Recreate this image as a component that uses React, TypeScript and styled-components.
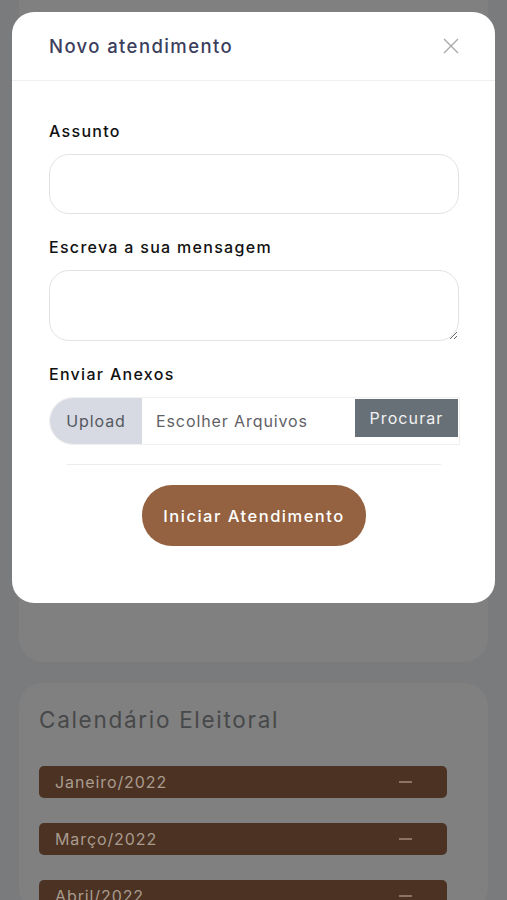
import styled, { createGlobalStyle } from 'styled-components'

const GlobalStyle = createGlobalStyle`
  html, body {
    margin: 0;
    padding: 0;
    background: #7a7b7d;
    font-family: Inter, 'Noto Sans', sans-serif;
  }
  * {
    box-sizing: border-box;
  }
`

const months = ['Janeiro/2022', 'Março/2022', 'Abril/2022']

const Page = styled.div`
  position: relative;
  height: 900px;
  overflow: hidden;
  padding: 0 19px;
  display: flex;
  flex-direction: column;
  gap: 21px;
`

const Card = styled.section<{ $height?: number }>`
  background: #808080;
  border-radius: 24px;
  height: ${p => (p.$height ? `${p.$height}px` : 'auto')};
  padding: 19px 41px 0 20px;
  flex-shrink: 0;
`

const TopCard = styled(Card)`
  border-radius: 0 0 24px 24px;
`

const CardTitle = styled.h2`
  margin: 0 0 28px;
  font-size: 22.5px;
  font-weight: 400;
  line-height: 36px;
  letter-spacing: 1.7px;
  color: #474849;
`

const AccordionList = styled.div`
  display: flex;
  flex-direction: column;
  gap: 25px;
`

const AccordionBar = styled.div`
  height: 32px;
  background: #4c3223;
  border-radius: 5px;
  display: flex;
  align-items: center;
  justify-content: space-between;
  padding: 0 35px 0 16px;
  color: #a99c8f;
  font-size: 16px;
  letter-spacing: 0.9px;
`

const Minus = styled.span`
  width: 13px;
  height: 1.5px;
  background: #8b7463;
`

const Modal = styled.div`
  position: absolute;
  top: 12px;
  left: 12px;
  width: 483px;
  height: 591px;
  background: #fff;
  border-radius: 22px;
  display: flex;
  flex-direction: column;
`

const ModalHeader = styled.header`
  height: 69px;
  flex-shrink: 0;
  border-bottom: 1px solid #eeeff1;
  display: flex;
  align-items: center;
  justify-content: space-between;
  padding: 0 36px 0 37px;
`

const ModalTitle = styled.h1`
  margin: 0;
  font-size: 18.5px;
  font-weight: 500;
  letter-spacing: 1.4px;
  color: #3b3e5d;
`

const CloseButton = styled.button`
  border: none;
  background: none;
  padding: 0;
  width: 16px;
  height: 16px;
  display: flex;
  cursor: pointer;
`

const ModalBody = styled.form`
  padding: 38px 36px 0 37px;
  display: flex;
  flex-direction: column;
`

const Label = styled.label`
  font-size: 16px;
  font-weight: 500;
  line-height: 24px;
  letter-spacing: 1.3px;
  color: #111;
  margin-bottom: 11px;
`

const TextInput = styled.input`
  height: 60px;
  border: 1.5px solid #e2e2e2;
  border-radius: 20px;
  margin-bottom: 21px;
  font: inherit;
  padding: 0 18px;
  outline: none;
`

const TextArea = styled.textarea`
  height: 71px;
  border: 1.5px solid #e2e2e2;
  border-radius: 20px;
  margin-bottom: 21px;
  font: inherit;
  padding: 12px 18px;
  resize: vertical;
  outline: none;
`

const FileGroup = styled.div`
  height: 48px;
  display: flex;
  border: 1px solid #f0f0f0;
  border-radius: 24px 0 0 24px;
  margin-right: -1px;
  font-size: 16px;
  letter-spacing: 0.9px;
`

const UploadTag = styled.span`
  width: 92px;
  background: #d7dae2;
  border-radius: 24px 0 0 24px;
  display: flex;
  align-items: center;
  justify-content: center;
  color: #555860;
`

const FileName = styled.span`
  flex: 1;
  display: flex;
  align-items: center;
  padding-left: 14px;
  color: #5f6166;
`

const BrowseButton = styled.span`
  width: 103px;
  height: 38px;
  margin: 1px 1px 0 0;
  background: #687077;
  color: #f2f2f2;
  display: flex;
  align-items: center;
  justify-content: center;
  letter-spacing: 1.1px;
`

const Divider = styled.hr`
  border: none;
  border-top: 1.5px solid #ececec;
  margin: 19px 18px 20px;
`

const SubmitButton = styled.button`
  align-self: center;
  width: 224px;
  height: 61px;
  border: none;
  border-radius: 30px;
  background: #946240;
  color: #fff;
  font-family: inherit;
  font-size: 16.5px;
  font-weight: 500;
  letter-spacing: 1.5px;
  cursor: pointer;
`

export default function App () {
  return (
    <>
      <GlobalStyle />
      <Page>
        <TopCard $height={662} />
        <Card>
          <CardTitle>Calendário Eleitoral</CardTitle>
          <AccordionList>
            {months.map(month => (
              <AccordionBar key={month}>
                {month}
                <Minus />
              </AccordionBar>
            ))}
          </AccordionList>
        </Card>

        <Modal role="dialog">
          <ModalHeader>
            <ModalTitle>Novo atendimento</ModalTitle>
            <CloseButton type="button" aria-label="Fechar">
              <svg width="16" height="16" viewBox="0 0 16 16">
                <path d="M1 1L15 15M15 1L1 15" stroke="#a9a9a9" strokeWidth="1.4" fill="none" />
              </svg>
            </CloseButton>
          </ModalHeader>

          <ModalBody onSubmit={e => e.preventDefault()}>
            <Label htmlFor="assunto">Assunto</Label>
            <TextInput id="assunto" />

            <Label htmlFor="mensagem">Escreva a sua mensagem</Label>
            <TextArea id="mensagem" />

            <Label>Enviar Anexos</Label>
            <FileGroup>
              <UploadTag>Upload</UploadTag>
              <FileName>Escolher Arquivos</FileName>
              <BrowseButton>Procurar</BrowseButton>
            </FileGroup>

            <Divider />

            <SubmitButton type="submit">Iniciar Atendimento</SubmitButton>
          </ModalBody>
        </Modal>
      </Page>
    </>
  )
}
